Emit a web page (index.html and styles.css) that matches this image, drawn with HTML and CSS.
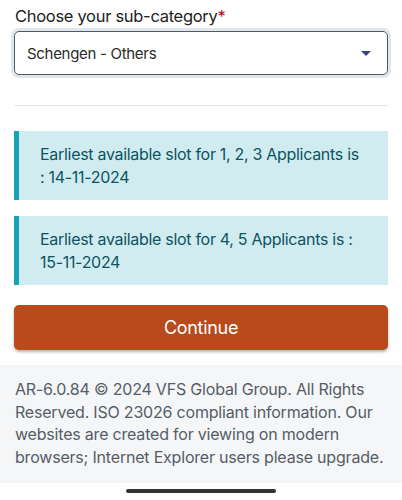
FILE: index.html
```html
<!DOCTYPE html>
<html lang="en">
<head>
    <meta charset="UTF-8">
    <meta name="viewport" content="width=device-width, initial-scale=1.0">
    <title>Appointment Details</title>
    <link rel="stylesheet" href="styles.css">
</head>
<body>
    <main class="page">
        <div class="field">
            <label class="field-label" for="subCategory">Choose your sub-category<span class="req">*</span></label>
            <div class="select-box">
                <span class="select-value">Schengen - Others</span>
                <svg class="select-arrow" width="10" height="5" viewBox="0 0 10 5"><path d="M0 0h10L5 5z" fill="#3b3f8c"/></svg>
            </div>
        </div>

        <hr class="divider">

        <div class="alert">Earliest available slot for 1, 2, 3 Applicants is : 14-11-2024</div>
        <div class="alert">Earliest available slot for 4, 5 Applicants is : 15-11-2024</div>

        <button type="button" class="btn-continue">Continue</button>
    </main>

    <footer class="footer">
        <p>AR-6.0.84 &copy; 2024 VFS Global Group. All Rights Reserved. ISO 23026 compliant information. Our websites are created for viewing on modern browsers; Internet Explorer users please upgrade.</p>
    </footer>
    <div class="home-bar"></div>
</body>
</html>
```

FILE: styles.css
```css
body {
    margin: 0;
    font-family: Inter, "Noto Sans", sans-serif;
    letter-spacing: -0.3px;
    background-color: white;
    color: #222;
}
.page {
    padding: 4px 14px 15px;
}
.field-label {
    display: block;
    font-size: 16.5px;
    line-height: 24px;
    color: #222;
    padding-left: 1px;
}
.req {
    color: #b0102a;
}
.select-box {
    margin-top: 3px;
    height: 44px;
    box-sizing: border-box;
    display: flex;
    align-items: center;
    justify-content: space-between;
    padding: 0 16px 0 12px;
    border: 1.5px solid #4d5b66;
    border-radius: 5px;
    box-shadow: 0 0 0 3px #dfe6ec;
    font-size: 15px;
    color: #2a2a2a;
}
.divider {
    margin: 30px 0 25px;
    border: none;
    border-top: 1px solid #e3e3e3;
}
.alert {
    background-color: #d1ecf1;
    border-left: 5px solid #17a2b8;
    color: #0c5460;
    font-size: 16px;
    line-height: 22.5px;
    padding: 12px 24px 12px 21px;
    margin-bottom: 16px;
}
.btn-continue {
    display: block;
    width: 100%;
    height: 45px;
    margin-top: 20px;
    border: none;
    border-radius: 5px;
    background-color: #b84a1b;
    color: white;
    font-family: Inter, "Noto Sans", sans-serif;
    letter-spacing: -0.3px;
    font-size: 18px;
    box-shadow: 0 2px 3px rgba(0, 0, 0, 0.3);
}
.footer {
    background-color: #f5f6f8;
    padding: 13px 15px 14px;
}
.footer p {
    margin: 0;
    font-size: 16px;
    line-height: 22.7px;
    letter-spacing: -0.2px;
    color: #555d66;
}
.home-bar {
    width: 150px;
    height: 4px;
    margin: 6px auto 0;
    border-radius: 2px;
    background-color: #333;
}
```
